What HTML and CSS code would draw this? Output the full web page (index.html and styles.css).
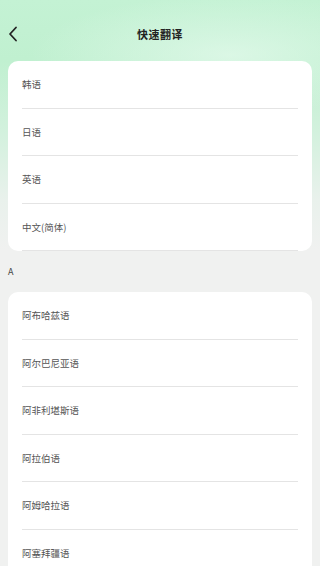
FILE: index.html
```html
<!DOCTYPE html>
<html lang="zh">
<head>
<meta charset="utf-8">
<link rel="stylesheet" href="styles.css">
</head>
<body>
<div class="page">
  <header class="topbar">
    <svg class="back" width="10" height="16" viewBox="0 0 10 16"><path d="M8 1.5 L2 8 L8 14.5" fill="none" stroke="#222" stroke-width="1.8" stroke-linecap="round" stroke-linejoin="round"/></svg>
    <h1 class="title">快速翻译</h1>
  </header>
  <ul class="card">
    <li class="row">韩语</li>
    <li class="row">日语</li>
    <li class="row">英语</li>
    <li class="row">中文(简体)</li>
  </ul>
  <div class="section">A</div>
  <ul class="card">
    <li class="row">阿布哈兹语</li>
    <li class="row">阿尔巴尼亚语</li>
    <li class="row">阿非利堪斯语</li>
    <li class="row">阿拉伯语</li>
    <li class="row">阿姆哈拉语</li>
    <li class="row">阿塞拜疆语</li>
  </ul>
</div>
</body>
</html>
```

FILE: styles.css
```css
html, body {
  margin: 0;
  padding: 0;
}
body {
  font-family: "Noto Sans CJK SC", "Noto Sans", sans-serif;
  background: #f0f1f0;
  overflow: hidden;
}
.page {
  min-height: 566px;
  padding: 0 8px;
  background:
    radial-gradient(ellipse 200px 60px at 230px 55px, rgba(230, 250, 238, 0.7), rgba(230, 250, 238, 0)),
    linear-gradient(180deg, #c4f2d4 0px, #c0f0d0 60px, #d2f1dd 130px, #e9f1ec 200px, #f0f1f0 250px);
}
.topbar {
  position: relative;
  height: 61px;
  display: flex;
  align-items: center;
  justify-content: center;
  padding-top: 8px;
  box-sizing: border-box;
}
.back {
  position: absolute;
  left: 0;
  top: 26px;
}
.title {
  margin: 0;
  font-size: 11px;
  font-weight: 700;
  color: #222;
  letter-spacing: 0.5px;
  line-height: 1;
}
.card {
  list-style: none;
  margin: 0;
  padding: 0 14px;
  background: #fff;
  border-radius: 10px;
}
.row {
  height: 47.5px;
  box-sizing: border-box;
  display: flex;
  align-items: center;
  font-size: 9.5px;
  color: #555;
  border-bottom: 1px solid #e4e4e4;
}
.section {
  height: 41px;
  display: flex;
  align-items: center;
  font-size: 9px;
  color: #444;
}
```
